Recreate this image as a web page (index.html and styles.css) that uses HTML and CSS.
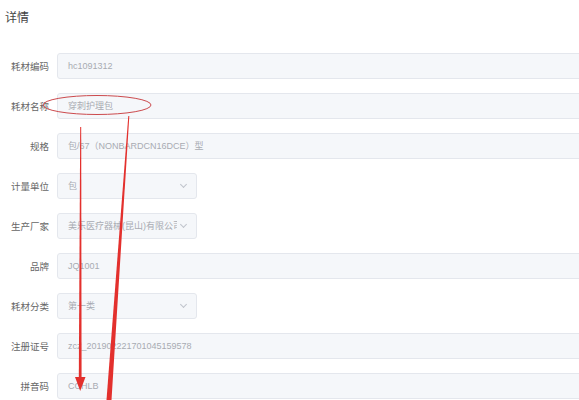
FILE: index.html
```html
<!DOCTYPE html>
<html lang="en">
<head>
  <meta charset="UTF-8" />
  <title>详情</title>
  <link rel="stylesheet" href="styles.css">
</head>
<body>
  <div class="page">
    <h2 class="title">详情</h2>

    <div class="form">
      <div class="row">
        <label>耗材编码</label>
        <div class="field wide">hc1091312</div>
      </div>
      <div class="row">
        <label>耗材名称</label>
        <div class="field wide">穿刺护理包</div>
      </div>
      <div class="row">
        <label>规格</label>
        <div class="field wide">包/67（NONBARDCN16DCE）型</div>
      </div>
      <div class="row">
        <label>计量单位</label>
        <div class="field select"><span class="val">包</span><span class="arrow"></span></div>
      </div>
      <div class="row">
        <label>生产厂家</label>
        <div class="field select"><span class="val">美乐医疗器械(昆山)有限公司</span><span class="arrow"></span></div>
      </div>
      <div class="row">
        <label>品牌</label>
        <div class="field wide">JQ1001</div>
      </div>
      <div class="row">
        <label>耗材分类</label>
        <div class="field select"><span class="val">第一类</span><span class="arrow"></span></div>
      </div>
      <div class="row">
        <label>注册证号</label>
        <div class="field wide">zcz_201902221701045159578</div>
      </div>
      <div class="row">
        <label>拼音码</label>
        <div class="field wide">CCHLB</div>
      </div>
    </div>

    <!-- red annotation marks drawn over the form -->
    <svg class="marks" width="579" height="400" viewBox="0 0 579 400">
      <ellipse cx="97" cy="105" rx="54" ry="9.5" fill="none" stroke="#cc4a4d" stroke-width="1" />
      <polygon points="80.2,127 81.2,127 81.6,379 78.8,379" fill="#e3302d" />
      <polygon points="75,377 85.5,377 80.2,391" fill="#e3302d" />
      <polygon points="128.3,116 129.3,116 111.5,400 106.5,400" fill="#e3302d" />
    </svg>
  </div>
</body>
</html>
```

FILE: styles.css
```css
html, body {
  margin: 0;
  padding: 0;
  background: #fff;
  overflow: hidden;
}
body {
  font-family: "Liberation Sans", "Noto Sans CJK SC", sans-serif;
  color: #666;
}
.page {
  position: relative;
  width: 579px;
  height: 400px;
}
.title {
  margin: 0;
  padding: 10px 0 0 5px;
  font-size: 12px;
  line-height: 16px;
  font-weight: normal;
  color: #444;
}
.form {
  padding-top: 27px;
}
.row {
  display: flex;
  align-items: center;
  height: 26px;
  margin-bottom: 14px;
}
.row label {
  width: 49px;
  margin-right: 8px;
  flex-shrink: 0;
  text-align: right;
  font-size: 9.5px;
  color: #666;
}
.field {
  box-sizing: border-box;
  height: 26px;
  line-height: 24px;
  padding: 0 10px;
  background: #f5f7fa;
  border: 1px solid #e4e7ed;
  border-radius: 3px;
  font-size: 9px;
  color: #a8abb2;
  white-space: nowrap;
  overflow: hidden;
  flex-shrink: 0;
}
.wide {
  width: 560px;
}
.select {
  width: 140px;
  display: flex;
  align-items: center;
  padding-right: 6px;
}
.select .val {
  flex: 1;
  overflow: hidden;
  white-space: nowrap;
}
.select .arrow {
  width: 4px;
  height: 4px;
  margin: 0 4px 3px 4px;
  border-right: 1px solid #c0c4cc;
  border-bottom: 1px solid #c0c4cc;
  transform: rotate(45deg);
  flex-shrink: 0;
}
.marks {
  position: absolute;
  left: 0;
  top: 0;
  pointer-events: none;
}
```
